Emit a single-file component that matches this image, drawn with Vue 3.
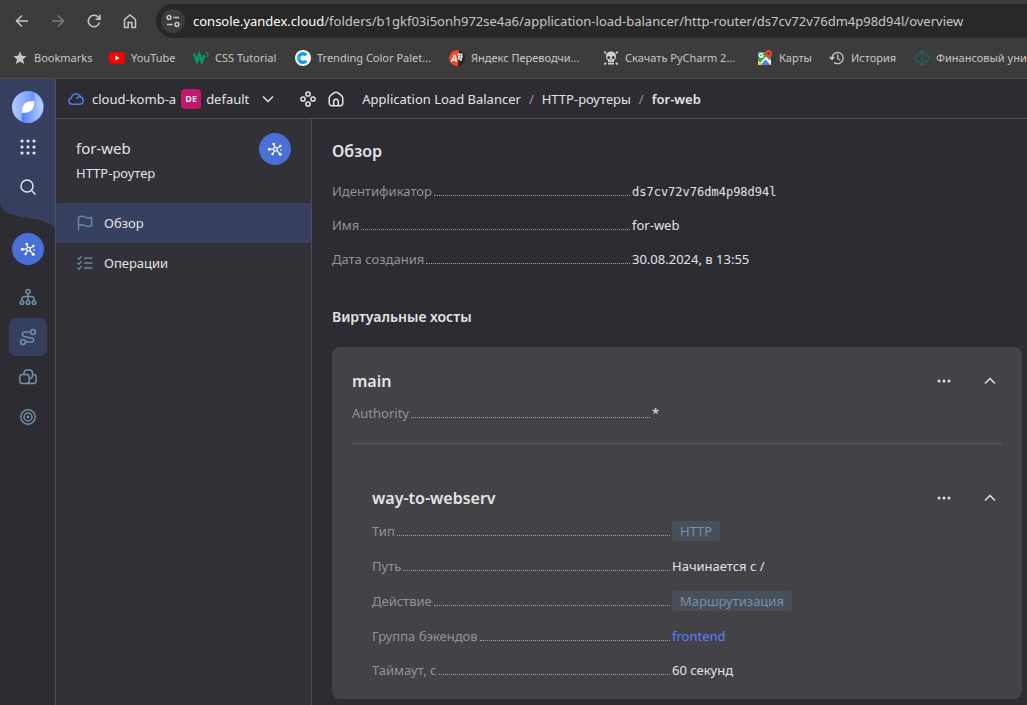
<script setup>
const bookmarks = [
  { icon: 'star', label: 'Bookmarks' },
  { icon: 'youtube', label: 'YouTube' },
  { icon: 'w3', label: 'CSS Tutorial' },
  { icon: 'palette', label: 'Trending Color Palet...' },
  { icon: 'translate', label: 'Яндекс Переводчи...' },
  { icon: 'skull', label: 'Скачать PyCharm 2...' },
  { icon: 'maps', label: 'Карты' },
  { icon: 'history', label: 'История' },
  { icon: 'fin', label: 'Финансовый уни' },
]

const overview = [
  { label: 'Идентификатор', value: 'ds7cv72v76dm4p98d94l', kind: 'mono' },
  { label: 'Имя', value: 'for-web', kind: 'text' },
  { label: 'Дата создания', value: '30.08.2024, в 13:55', kind: 'text' },
]

const route = [
  { label: 'Тип', value: 'HTTP', kind: 'tag' },
  { label: 'Путь', value: 'Начинается с /', kind: 'text' },
  { label: 'Действие', value: 'Маршрутизация', kind: 'tag' },
  { label: 'Группа бэкендов', value: 'frontend', kind: 'link' },
  { label: 'Таймаут, с', value: '60 секунд', kind: 'text' },
]
</script>

<template>
  <div class="window">
    <div class="browser">
      <div class="toolbar">
        <button class="nav" aria-label="Назад">
          <svg width="16" height="16" viewBox="0 0 16 16"><path d="M14 8H3M8 2.500 2.500 8 8 13.500" /></svg>
        </button>
        <button class="nav dim" aria-label="Вперёд" disabled>
          <svg width="16" height="16" viewBox="0 0 16 16"><path d="M2 8h11M8 2.500 13.500 8 8 13.500" /></svg>
        </button>
        <button class="nav" aria-label="Обновить">
          <svg width="16" height="16" viewBox="0 0 16 16"><path d="M13.500 9.500A5.700 5.700 0 1 1 12.300 4.200L13.800 6M14 1.800V6.200H9.600" /></svg>
        </button>
        <button class="nav" aria-label="Домой">
          <svg width="16" height="16" viewBox="0 0 16 16"><path d="M2.500 6.500 8 2l5.500 4.500v8h-3.700V9.500H6.200v5H2.500z" /></svg>
        </button>
        <label class="address">
          <span class="site">
            <svg width="16" height="16" viewBox="0 0 16 16"><circle cx="4" cy="4.500" r="1.900" /><path d="M8.500 4.500H14M2 11.500h5.500" /><circle cx="12" cy="11.500" r="1.900" /></svg>
          </span>
          <span class="url"><b>console.yandex.cloud</b>/folders/b1gkf03i5onh972se4a6/application-load-balancer/http-router/ds7cv72v76dm4p98d94l/overview</span>
        </label>
      </div>
      <nav class="bookmarks">
        <a v-for="b in bookmarks" :key="b.label" href="#">
          <svg width="16" height="16" viewBox="0 0 16 16">
            <path v-if="b.icon === 'star'" fill="#c7c7c7" d="M8 1.500l1.900 4.300 4.700.4-3.600 3.100 1.100 4.600L8 11.500l-4.100 2.400L5 9.300 1.400 6.200l4.700-.4z" />
            <g v-else-if="b.icon === 'youtube'">
              <rect y="2.300" width="16" height="11.400" rx="3" fill="#f00" />
              <path d="M6.400 5.600v4.800L10.600 8z" fill="#fff" />
            </g>
            <g v-else-if="b.icon === 'w3'" fill="none" stroke="#059862">
              <path stroke-width="2.600" d="M1 3.500l3 8L6.300 4.500 8.800 11.500 11.500 5" />
              <path stroke-width="1" d="M12.600 2.500h2.500l-1.300 1.700c2.200 0 1.700 2.500-.2 2.500l-1-.5" />
            </g>
            <g v-else-if="b.icon === 'palette'">
              <circle cx="8" cy="8" r="8" fill="#fff" />
              <path d="M11.300 5.300A4.300 4.300 0 1 0 11.300 10.700" fill="none" stroke="#129cf5" stroke-width="3.400" />
              <path d="M4.100 6.200a4.300 4.300 0 0 0 0 3.600" fill="none" stroke="#19c2f2" stroke-width="3.200" />
            </g>
            <g v-else-if="b.icon === 'translate'">
              <circle cx="8" cy="8" r="8" fill="#242424" />
              <path d="M10 .3A8 8 0 1 0 9 16z" fill="#fb4126" />
              <path d="M2.300 12 5.200 5.500h1L7.500 12M3.500 10h3.700" fill="none" stroke="#fff" stroke-width="1.400" />
              <path d="M8.500 4.500h5M9 7h4.800M10 3v6l2 1 1-6.500" fill="none" stroke="#ddd" />
            </g>
            <g v-else-if="b.icon === 'skull'" fill="#cfcfcf">
              <path fill-rule="evenodd" d="M8 1.500c3.200 0 5 2.200 5 4.700 0 1.800-.3 3.200-2 4v2H5v-2c-1.700-.8-2-2.200-2-4C3 3.700 4.800 1.500 8 1.500zM5.700 6a1.500 1.500 0 1 0 0 3 1.500 1.500 0 0 0 0-3zm4.600 0a1.500 1.500 0 1 0 0 3 1.500 1.500 0 0 0 0-3zM8 8.800l-.8 1.500h1.600z" />
              <path d="M5 13h6v1.500H5zM1 1.500h1.500l1 1.500-1 .8L1 3zM15 1.500h-1.500l-1 1.500 1 .8L15 3zM1 14.800v-1.500l2-1 .7 1-1.200 1.500zM15 14.800v-1.500l-2-1-.7 1 1.200 1.500z" />
            </g>
            <g v-else-if="b.icon === 'maps'">
              <path d="M1 2h13v13H1z" fill="#34a35a" />
              <path d="M1 15 9 6.500l5 4V15z" fill="#f4f4f4" />
              <path d="M3.500 15 8.500 9.500l5 5.500z" fill="#4285f4" />
              <path d="M1 10.500 5 14l-1 1H1z" fill="#f9cf3c" />
              <path d="M5.800 4.200A1.900 1.900 0 1 0 6 6H4.400" fill="none" stroke="#fff" />
              <path d="M11.500 0a3.500 3.500 0 0 1 3.500 3.500c0 2.500-2.800 3.700-3.500 6.500-.7-2.800-3.500-4-3.500-6.500A3.500 3.500 0 0 1 11.500 0z" fill="#ea4335" />
              <circle cx="11.500" cy="3.500" r="1.200" fill="#8c1b13" />
            </g>
            <g v-else-if="b.icon === 'history'" fill="none" stroke="#c7c7c7" stroke-width="1.300">
              <path d="M3 8.500A5.600 5.600 0 1 1 5 12.400M.5 7 3 9.300 5.300 7M8.700 4.500V8.500l2.500 1.700" />
            </g>
            <g v-else fill="none" stroke="#1d6166" stroke-width="1.500">
              <ellipse cx="8" cy="8" rx="6.800" ry="4.800" />
              <path d="M8 1v14M6 1.500h4M6 14.500h4" />
            </g>
          </svg>
          <span>{{ b.label }}</span>
        </a>
      </nav>
    </div>

    <div class="app">
      <aside class="rail">
        <svg class="wave" width="55" height="150" viewBox="0 0 55 150"><path d="M0 0H55V149C42 138 27 140 13 136 5 134 0 129 0 122Z" /></svg>
        <a class="logo" href="#" aria-label="Yandex Cloud">
          <svg width="32" height="32" viewBox="0 0 32 32">
            <defs>
              <linearGradient id="discA" x1="0" y1="0" x2="1" y2="0"><stop offset="0" stop-color="#b5caff" /><stop offset="1" stop-color="#4b7cf5" /></linearGradient>
              <linearGradient id="discB" x1="0" y1="0" x2="1" y2="0"><stop offset="0" stop-color="#4b7cf5" /><stop offset="1" stop-color="#c0d2ff" /></linearGradient>
            </defs>
            <circle cx="16" cy="16" r="16" fill="url(#discA)" />
            <path d="M22 1.200A16 16 0 0 1 10 30.800C9 26 10 22 11 21L21 11C23 8 23 4 22 1.200Z" fill="url(#discB)" />
            <path d="M22 10c0 7-1 12-12 12 0-7 1-12 12-12z" fill="#fff" />
          </svg>
        </a>
        <button class="tool" aria-label="Все сервисы">
          <svg width="16" height="16" viewBox="0 0 16 16"><g fill="#e5e5e8"><template v-for="y in 3" :key="y"><circle v-for="x in 3" :key="x" :cx="x * 6 - 4" :cy="y * 6 - 4" r="1.600" /></template></g></svg>
        </button>
        <button class="tool search" aria-label="Поиск">
          <svg width="16" height="16" viewBox="0 0 16 16"><circle cx="7" cy="7" r="6" /><path d="m11.500 11.500 4 4" /></svg>
        </button>
        <a class="service" href="#" aria-label="Application Load Balancer">
          <svg width="16" height="16" viewBox="0 0 16 16"><circle cx="8.500" cy="8.200" r="1.800" /><path d="M6.500 8.200H2.500M7.700 6.500 7 3.500M10 7.200 13 5.500M9.800 9.500 13 13M7.400 9.800 6 12.500" /><g class="dots"><circle cx="2.300" cy="8.200" r="1.500" /><circle cx="6.700" cy="3" r="1.300" /><circle cx="13.300" cy="5" r="1.200" /><circle cx="13.200" cy="13.300" r="1.500" /><circle cx="5.600" cy="13" r="1.300" /><circle cx="14" cy="9" r=".8" /></g></svg>
        </a>
        <a class="section" href="#" aria-label="Балансировщики">
          <svg width="18" height="18" viewBox="0 0 18 18"><circle cx="9" cy="3.500" r="2" /><path d="M9 5.500V12.500M3 12.500V11q0-2.500 2.500-2.500h7Q15 8.500 15 11v1.500" /><circle cx="3" cy="14.500" r="1.800" /><circle cx="9" cy="14.500" r="1.800" /><circle cx="15" cy="14.500" r="1.800" /></svg>
        </a>
        <a class="section active" href="#" aria-label="HTTP-роутеры">
          <svg width="18" height="18" viewBox="0 0 18 18"><circle cx="14" cy="4" r="2.400" /><circle cx="4" cy="14" r="2.400" /><path d="M11.500 4H5.500a2.300 2.300 0 0 0-.5 4.500l8.500 1.700A2 2 0 0 1 13 14H6.500" /></svg>
        </a>
        <a class="section" href="#" aria-label="Группы бэкендов">
          <svg width="18" height="18" viewBox="0 0 18 18"><rect x=".8" y="6.500" width="9.400" height="9" rx="2.800" /><path d="M5 6.500V5a3 3 0 0 1 3-3h2.500a3 3 0 0 1 3 3v2.500a3 3 0 0 1-3 3H10M13.500 6.500h1a2.700 2.700 0 0 1 2.700 2.700v3.600a2.700 2.700 0 0 1-2.700 2.700H7" /></svg>
        </a>
        <a class="section" href="#" aria-label="Целевые группы">
          <svg width="18" height="18" viewBox="0 0 18 18"><circle cx="9" cy="9" r="7.200" /><circle cx="9" cy="9" r="4" /><circle cx="9" cy="9" r=".7" /></svg>
        </a>
      </aside>

      <div class="page">
        <header class="top">
          <a class="cloud" href="#">
            <svg width="16" height="16" viewBox="0 0 16 16"><path d="M4 13.200a3.100 3.100 0 0 1-.7-6.100A4.900 4.900 0 0 1 12.600 6a3.700 3.700 0 0 1-.6 7.200zM8.500 7.800A3.300 3.300 0 0 1 12.500 6" /></svg>
            <span>cloud-komb-a</span>
          </a>
          <button class="folder"><i>DE</i><span>default</span>
            <svg width="12" height="12" viewBox="0 0 12 12"><path d="m1 3.500 5 5 5-5" /></svg>
          </button>
          <a class="ico" href="#" aria-label="Ресурсы">
            <svg width="16" height="16" viewBox="0 0 16 16"><circle cx="8" cy="3" r="2.100" /><circle cx="8" cy="13" r="2.100" /><circle cx="3" cy="8" r="2.100" /><circle cx="13" cy="8" r="2.100" /></svg>
          </a>
          <a class="ico" href="#" aria-label="Главная">
            <svg width="16" height="16" viewBox="0 0 16 16"><path d="M1.200 7.500Q1.200 5.500 3 4.200L6 1.900q2-1.400 4 0l3 2.300q1.800 1.300 1.800 3.300V12a2.700 2.700 0 0 1-2.700 2.700H3.900A2.700 2.700 0 0 1 1.200 12zM5.700 14.500V10.500a2.300 2.300 0 0 1 4.600 0v4" /></svg>
          </a>
          <nav class="crumbs">
            <a href="#">Application Load Balancer</a><span>/</span><a href="#">HTTP-роутеры</a><span>/</span><b>for-web</b>
          </nav>
        </header>

        <div class="body">
          <aside class="side">
            <div class="who">
              <div>
                <p class="name">for-web</p>
                <p class="type">HTTP-роутер</p>
              </div>
              <span class="service">
                <svg width="16" height="16" viewBox="0 0 16 16"><circle cx="8.500" cy="8.200" r="1.800" /><path d="M6.500 8.200H2.500M7.700 6.500 7 3.500M10 7.200 13 5.500M9.800 9.500 13 13M7.400 9.800 6 12.500" /><g class="dots"><circle cx="2.300" cy="8.200" r="1.500" /><circle cx="6.700" cy="3" r="1.300" /><circle cx="13.300" cy="5" r="1.200" /><circle cx="13.200" cy="13.300" r="1.500" /><circle cx="5.600" cy="13" r="1.300" /><circle cx="14" cy="9" r=".8" /></g></svg>
              </span>
            </div>
            <a class="item active" href="#">
              <svg width="16" height="16" viewBox="0 0 16 16"><path d="M1.500 15.500V2.200C4 .8 5.800 1 8 2.200s4 1.300 6.500.3v8.300C12 12 10.200 11.800 8 10.700s-4-1.300-6.500 0" /></svg>
              Обзор
            </a>
            <a class="item" href="#">
              <svg width="16" height="16" viewBox="0 0 16 16"><path d="M7 3h8.500M7 8h8.500M7 13h8.500M.5 2.800 2 4.200 4.500 1.300M.5 7.800 2 9.200 4.500 6.300M.5 12.800 2 14.200l2.500-2.900" /></svg>
              Операции
            </a>
          </aside>

          <main>
            <h1>Обзор</h1>
            <dl class="rows">
              <div v-for="r in overview" :key="r.label">
                <dt>{{ r.label }}</dt>
                <dd :class="r.kind">{{ r.value }}</dd>
              </div>
            </dl>
            <h2>Виртуальные хосты</h2>
            <section class="card">
              <div class="head">
                <h3>main</h3>
                <button aria-label="Действия"><svg width="16" height="16" viewBox="0 0 16 16"><g class="dots"><circle cx="3" cy="8" r="1.500" /><circle cx="8" cy="8" r="1.500" /><circle cx="13" cy="8" r="1.500" /></g></svg></button>
                <button aria-label="Свернуть"><svg width="16" height="16" viewBox="0 0 16 16"><path d="m3 10.500 5-5 5 5" /></svg></button>
              </div>
              <dl class="rows">
                <div>
                  <dt>Authority</dt>
                  <dd>*</dd>
                </div>
              </dl>
              <hr />
              <div class="inner">
                <div class="head">
                  <h3>way-to-webserv</h3>
                  <button aria-label="Действия"><svg width="16" height="16" viewBox="0 0 16 16"><g class="dots"><circle cx="3" cy="8" r="1.500" /><circle cx="8" cy="8" r="1.500" /><circle cx="13" cy="8" r="1.500" /></g></svg></button>
                  <button aria-label="Свернуть"><svg width="16" height="16" viewBox="0 0 16 16"><path d="m3 10.500 5-5 5 5" /></svg></button>
                </div>
                <dl class="rows">
                  <div v-for="r in route" :key="r.label">
                    <dt>{{ r.label }}</dt>
                    <dd v-if="r.kind === 'link'"><a href="#">{{ r.value }}</a></dd>
                    <dd v-else :class="r.kind">{{ r.value }}</dd>
                  </div>
                </dl>
              </div>
            </section>
          </main>
        </div>
      </div>
    </div>
  </div>
</template>

<style>
body {
  background: #2d2c33;
}
</style>

<style scoped>
* {
  box-sizing: border-box;
}
.window {
  display: flex;
  flex-direction: column;
  min-height: 100vh;
  overflow: hidden;
  background: #2d2c33;
  color: #e3e3e5;
  font: 13px/18px "Noto Sans", "Open Sans", sans-serif;
}
a {
  color: inherit;
  text-decoration: none;
}
button {
  padding: 0;
  border: 0;
  background: none;
  color: inherit;
  font: inherit;
}
svg {
  display: block;
  flex: none;
  fill: none;
  stroke: currentColor;
  stroke-width: 1.5;
}
p, h1, h2, h3, dl, dd {
  margin: 0;
}
.dots {
  fill: currentColor;
  stroke: none;
}

/* browser frame */
.browser {
  background: #3c3c3c;
  border-bottom: 1px solid #4b4b4b;
  color: #c7c7c7;
}
.toolbar {
  display: flex;
  align-items: center;
  gap: 20px;
  padding: 4px 0 0 14px;
}
.nav {
  display: grid;
}
.nav.dim {
  color: #7b7b7b;
}
.address {
  display: flex;
  flex: 1;
  align-items: center;
  gap: 8px;
  height: 34px;
  margin-left: -2px;
  padding-left: 5px;
  border-radius: 17px 0 0 17px;
  background: #282828;
  overflow: hidden;
}
.site {
  display: grid;
  flex: none;
  place-items: center;
  width: 24px;
  height: 24px;
  border-radius: 50%;
  background: #3c3c3c;
}
.url {
  font-size: 13px;
  white-space: nowrap;
}
.url b {
  color: #fff;
  font-weight: 400;
}
.bookmarks {
  display: grid;
  grid-template-columns: 97px 84px 102px 154px 154px 154px 72px 85px auto;
  height: 40px;
  padding-left: 12px;
  font-size: 11px;
  white-space: nowrap;
}
.bookmarks a {
  display: flex;
  align-items: center;
  gap: 6px;
}
.bookmarks svg {
  stroke: none;
}

/* service rail */
.app {
  display: flex;
  flex: 1;
}
.rail {
  position: relative;
  display: flex;
  flex: none;
  flex-direction: column;
  align-items: center;
  width: 56px;
  padding-top: 12px;
  border-right: 1px solid #4e4d53;
}
.wave {
  position: absolute;
  top: 0;
  left: 0;
  fill: #373f5e;
  stroke: none;
}
.logo {
  position: relative;
  margin-bottom: 4px;
}
.logo svg {
  stroke: none;
}
.tool {
  position: relative;
  display: grid;
  place-items: center;
  width: 40px;
  height: 40px;
}
.tool g {
  stroke: none;
}
.service {
  display: grid;
  flex: none;
  place-items: center;
  width: 32px;
  height: 32px;
  border-radius: 50%;
  background: #4a70d6;
  color: #fff;
}
.service svg {
  stroke-width: 1.2;
}
.rail .service {
  margin: 26px 0 13px;
}
.section {
  display: grid;
  place-items: center;
  width: 38px;
  height: 38px;
  margin-bottom: 2px;
  border-radius: 7px;
  color: #7090a8;
}
.section.active {
  background: #373f5e;
}

/* top bar */
.page {
  display: flex;
  flex: 1;
  flex-direction: column;
  min-width: 0;
}
.top {
  display: flex;
  align-items: center;
  height: 40px;
  padding-left: 12px;
  border-bottom: 1px solid #4e4d53;
  white-space: nowrap;
}
.cloud,
.folder {
  display: flex;
  align-items: center;
  gap: 8px;
}
.cloud svg {
  color: #4d7cf0;
}
.folder {
  gap: 5px;
  margin: 0 26px 0 5px;
}
.folder svg {
  margin-left: 8px;
}
.folder i {
  width: 20px;
  border-radius: 4px;
  background: #c2186b;
  font: 700 9px/20px "Noto Sans", sans-serif;
  text-align: center;
}
.ico {
  margin-right: 12px;
}
.crumbs {
  display: flex;
  gap: 8px;
  margin-left: 6px;
}
.crumbs span {
  color: #98979b;
}
.crumbs b {
  font-weight: 600;
}

/* side menu */
.body {
  display: flex;
  flex: 1;
}
.side {
  flex: none;
  width: 256px;
  border-right: 1px solid #4e4d53;
  background: #323137;
}
.who {
  display: flex;
  align-items: flex-start;
  justify-content: space-between;
  height: 84px;
  padding: 14px 20px 0;
}
.name {
  margin-top: 3px;
  font-size: 15px;
  line-height: 24px;
}
.type {
  margin-top: 4px;
}
.item {
  display: flex;
  align-items: center;
  gap: 11px;
  height: 40px;
  padding-left: 21px;
}
.item svg {
  color: #66869e;
}
.item.active {
  border-radius: 3px;
  background: #384060;
}

/* content */
main {
  flex: 1;
  min-width: 0;
  padding: 20px 5px 5px 20px;
}
h1 {
  margin-bottom: 19px;
  font-size: 16px;
  font-weight: 600;
  line-height: 24px;
}
h2 {
  margin: 39px 0 20px;
  font-size: 14px;
  font-weight: 600;
  line-height: 20px;
}
.rows {
  display: grid;
  gap: 16px;
}
.rows div {
  display: flex;
  align-items: baseline;
}
dt {
  display: flex;
  flex: none;
  align-items: baseline;
  width: 300px;
  color: #939297;
}
dt::after {
  content: "";
  flex: 1;
  margin: 0 2px;
  border-bottom: 1px dotted #a3a2a6;
}
.mono {
  font: 12px/16px "DejaVu Sans Mono", monospace;
}
.tag {
  padding: 0 8px;
  border-radius: 3px;
  background: #484f59;
  color: #7790ab;
  line-height: 20px;
}
dd a {
  color: #5282ff;
}
.card {
  padding: 20px;
  border-radius: 8px;
  background: #434247;
}
.head {
  display: flex;
  align-items: center;
  gap: 22px;
  height: 28px;
  margin-bottom: 9px;
}
h3 {
  flex: 1;
  font-size: 16px;
  font-weight: 600;
  line-height: 24px;
}
.head button {
  display: grid;
  place-items: center;
  width: 24px;
  height: 24px;
}
hr {
  height: 1px;
  margin: 21px 0 40px;
  border: 0;
  background: #5c5b60;
}
.inner {
  padding-left: 20px;
}
</style>
